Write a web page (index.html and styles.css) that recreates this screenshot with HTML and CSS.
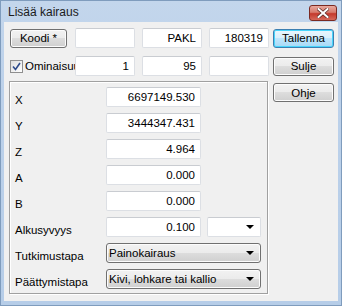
FILE: index.html
```html
<!DOCTYPE html>
<html lang="fi">

<head>
    <meta charset="UTF-8">
    <title>Lisää kairaus</title>
    <link rel="stylesheet" href="styles.css">
</head>

<body>
    <div class="window">
        <div class="titlebar">
            <span class="title">Lisää kairaus</span>
            <span class="close">
                <svg width="12" height="10" viewBox="0 0 12 10">
                    <path d="M1.5 1 L10.5 9 M10.5 1 L1.5 9" stroke="#5a2a25" stroke-width="3.4" stroke-linecap="square" />
                    <path d="M1.5 1 L10.5 9 M10.5 1 L1.5 9" stroke="#fff" stroke-width="2" stroke-linecap="square" />
                </svg>
            </span>
        </div>

        <div class="client">
            <div class="row">
                <div class="btn koodi">Koodi *</div>
                <div class="field"></div>
                <div class="field">PAKL</div>
                <div class="field last">180319</div>
                <div class="btn side default">Tallenna</div>
            </div>

            <div class="row second">
                <div class="check">
                    <span class="box">
                        <svg width="9" height="9" viewBox="0 0 9 9">
                            <path d="M1 4.5 L3.5 7.5 L8 1" fill="none" stroke="#2d4a8a" stroke-width="1.6" />
                        </svg>
                    </span>
                    <span class="check-label">Ominaisuus</span>
                </div>
                <div class="field">1</div>
                <div class="field">95</div>
                <div class="field last"></div>
                <div class="btn side">Sulje</div>
            </div>

            <div class="lower">
                <div class="group">
                    <div class="prow"><span class="lbl">X</span><div class="field wide">6697149.530</div></div>
                    <div class="prow"><span class="lbl">Y</span><div class="field wide">3444347.431</div></div>
                    <div class="prow"><span class="lbl">Z</span><div class="field wide">4.964</div></div>
                    <div class="prow"><span class="lbl">A</span><div class="field wide">0.000</div></div>
                    <div class="prow"><span class="lbl">B</span><div class="field wide">0.000</div></div>
                    <div class="prow">
                        <span class="lbl">Alkusyvyys</span>
                        <div class="field wide">0.100</div>
                        <div class="field drop"><span class="arrow"></span></div>
                    </div>
                    <div class="prow">
                        <span class="lbl">Tutkimustapa</span>
                        <div class="combo">Painokairaus<span class="arrow"></span></div>
                    </div>
                    <div class="prow">
                        <span class="lbl">Päättymistapa</span>
                        <div class="combo">Kivi, lohkare tai kallio<span class="arrow"></span></div>
                    </div>
                </div>
                <div class="btn side ohje">Ohje</div>
            </div>
        </div>
    </div>
</body>

</html>
```

FILE: styles.css
```css
body {
    margin: 0;
    font-family: "Liberation Sans", Arial, sans-serif;
    font-size: 11.5px;
    color: #000;
}

.window {
    width: 342px;
    height: 306px;
    box-sizing: border-box;
    border: 1px solid #7f9cbd;
    background: linear-gradient(#c3d6ec, #bcd1ea 30%, #b6cde8);
    display: flex;
    flex-direction: column;
}

.titlebar {
    height: 21px;
    display: flex;
    align-items: center;
    justify-content: space-between;
    padding: 0 4px 0 7px;
}

.title {
    font-size: 12px;
    color: #1b1b1b;
    margin-top: 1px;
}

.close {
    width: 26px;
    height: 14px;
    margin-top: 2px;
    border: 1px solid #7b2a22;
    border-radius: 3px;
    background: linear-gradient(#e8a99f, #d77b6d 45%, #c4392c 55%, #d5695a);
    display: flex;
    align-items: center;
    justify-content: center;
}

.client {
    flex: 1;
    margin: 0 3px 4px 3px;
    background: #f0f0f0;
    padding: 6px 0 0 6px;
}

.row {
    display: flex;
    align-items: center;
    height: 20px;
}

.second {
    margin-top: 8px;
}

.btn {
    height: 19px;
    box-sizing: border-box;
    border: 1px solid #707070;
    border-radius: 3px;
    background: linear-gradient(#f2f2f2, #ebebeb 50%, #dddddd 50%, #cfcfcf);
    box-shadow: inset 0 0 0 1px #fcfcfc;
    display: flex;
    align-items: center;
    justify-content: center;
}

.koodi {
    width: 57px;
    margin-right: 8px;
}

.side {
    width: 61px;
}

.default {
    border-color: #3c7fb1;
    background: linear-gradient(#eaf6fd, #d9f0fc 50%, #bee6fd 50%, #a7d9f5);
    box-shadow: inset 0 0 0 1px #48d5fb;
}

.field {
    width: 60px;
    height: 20px;
    box-sizing: border-box;
    border: 1px solid #dcdfe4;
    border-top-color: #c9ccd1;
    border-radius: 2px;
    background: #fff;
    margin-right: 7px;
    text-align: right;
    padding: 0 5px;
    line-height: 18px;
}

.field.last {
    margin-right: 4px;
}

.check {
    width: 65px;
    display: flex;
    align-items: center;
    overflow: hidden;
    white-space: nowrap;
}

.box {
    width: 13px;
    height: 13px;
    flex: none;
    box-sizing: border-box;
    border: 1px solid #8f8f8f;
    background: linear-gradient(135deg, #dedede, #fff);
    display: flex;
    align-items: center;
    justify-content: center;
    margin-right: 2px;
}

.lower {
    display: flex;
    align-items: flex-start;
    margin-top: 5px;
}

.group {
    width: 259px;
    height: 213px;
    box-sizing: border-box;
    margin-left: -1px;
    border: 1px solid #a0a0a0;
    box-shadow: 1px 1px 0 #fff, inset 1px 1px 0 #fff;
    padding: 5px 0 0 5px;
    display: flex;
    flex-direction: column;
    gap: 6px;
}

.ohje {
    margin: 2px 0 0 5px;
}

.prow {
    display: flex;
    height: 20px;
}

.lbl {
    width: 91px;
    align-self: flex-end;
    line-height: 13px;
}

.field.wide {
    width: 95px;
    margin-right: 6px;
}

.field.drop {
    width: 54px;
    margin-right: 0;
    position: relative;
}

.combo {
    width: 155px;
    height: 20px;
    box-sizing: border-box;
    border: 1px solid #707070;
    border-radius: 3px;
    background: linear-gradient(#f2f2f2, #ebebeb 50%, #dddddd 50%, #cfcfcf);
    box-shadow: inset 0 0 0 1px #fcfcfc;
    padding-left: 2px;
    line-height: 18px;
    position: relative;
}

.arrow {
    position: absolute;
    right: 6px;
    top: 7px;
    width: 0;
    height: 0;
    border-left: 4px solid transparent;
    border-right: 4px solid transparent;
    border-top: 4px solid #000;
}
```
